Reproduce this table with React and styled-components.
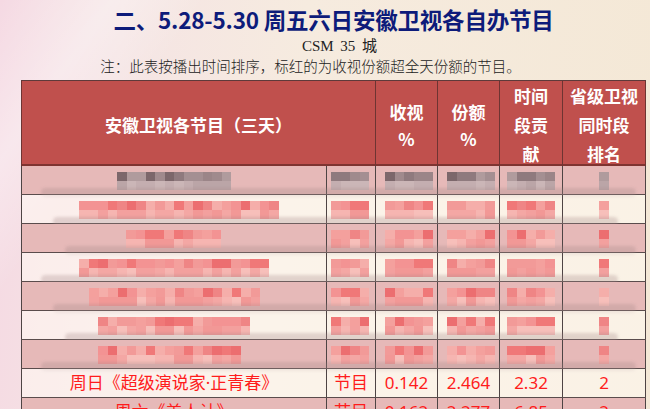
import React from "react";
import styled, { createGlobalStyle } from "styled-components";

const GlobalStyle = createGlobalStyle`
  html, body {
    margin: 0;
    padding: 0;
  }
  body {
    width: 650px;
    height: 409px;
    overflow: hidden;
    font-family: "Noto Sans CJK SC", "Noto Sans", sans-serif;
  }
`;

const Slide = styled.div`
  width: 650px;
  height: 409px;
  overflow: hidden;
  box-sizing: border-box;
  padding-left: 21px;
  background:
    linear-gradient(125deg, rgba(255, 255, 255, 0) 0%, rgba(255, 255, 255, 0.35) 12%, rgba(255, 255, 255, 0) 22%),
    linear-gradient(95deg, #f5d9e3 0%, #f5e4e4 18%, #f6ebdf 45%, #f4e8d6 100%);
  display: flex;
  flex-direction: column;
  & > * {
    flex-shrink: 0;
  }
`;

const Heading = styled.div`
  width: 625px;
  display: flex;
  flex-direction: column;
  align-items: center;
  margin-bottom: 2px;
`;

const Title = styled.h1`
  margin: 4px 0 0;
  font-family: "Noto Sans CJK SC", sans-serif;
  font-weight: 700;
  font-size: 22.5px;
  line-height: 30px;
  color: #0d1b7a;
  letter-spacing: -0.2px;
`;

const Source = styled.div`
  margin-top: 2px;
  font-family: "Liberation Serif", "Noto Sans CJK SC", serif;
  font-size: 15px;
  line-height: 20px;
  word-spacing: 3px;
  color: #222;
  padding-left: 12px;
`;

const Note = styled.div`
  font-family: "Liberation Serif", "Noto Sans CJK SC", serif;
  font-size: 14.5px;
  line-height: 22px;
  color: #222;
  padding-right: 46px;
  font-weight: 300;
`;

const cols = "305px 49px 62px 62px 63px 84px";

const HeadRow = styled.div`
  display: grid;
  grid-template-columns: ${cols};
  width: 625px;
  height: 86px;
  box-sizing: border-box;
  background: #c0504d;
  border-top: 1px solid #5e3a3a;
  border-bottom: 2px solid #7e3431;
`;

const HeadCell = styled.div`
  grid-column: ${({ $span }) => ($span ? `span ${$span}` : "auto")};
  display: flex;
  align-items: center;
  justify-content: center;
  text-align: center;
  color: #fff;
  font-weight: 700;
  font-size: 17px;
  line-height: ${({ $tight }) => ($tight ? "29px" : "27px")};
  border-left: 1px solid #6e3432;
  border-right: ${({ $last }) => ($last ? "1px solid #6e3432" : "none")};
  white-space: pre-line;
`;

const BodyRow = styled.div`
  position: relative;
  display: grid;
  grid-template-columns: ${cols};
  width: 625px;
  height: 29px;
  box-sizing: border-box;
  border-bottom: 1px solid #5a4c4c;
  background: ${({ $odd }) =>
    $odd ? "#e6b9b8" : "rgba(255, 250, 242, 0.55)"};
`;

const Cell = styled.div`
  display: flex;
  align-items: center;
  justify-content: ${({ $text }) => ($text ? "center" : "flex-start")};
  padding-left: ${({ $offset }) => `${$offset || 0}px`};
  border-left: 1px solid #4e4444;
  border-right: ${({ $last }) => ($last ? "1px solid #4e4444" : "none")};
  color: #ff1c1c;
  font-family: "Noto Sans", "Noto Sans CJK SC", sans-serif;
  font-size: 17px;
  line-height: 28px;
  white-space: nowrap;
  overflow: hidden;
`;

const MosaicGrid = styled.div`
  display: grid;
  grid-template-columns: repeat(${({ $n }) => $n}, 9.5px);
  grid-template-rows: 9px 9px;
  margin-top: 2px;
  filter: blur(0.5px);
`;

const Block = styled.div`
  background: ${({ $c }) => $c};
`;

const Smear = styled.div`
  position: absolute;
  left: ${({ $l }) => $l}px;
  right: ${({ $r }) => $r}px;
  top: 22px;
  height: 9px;
  border-radius: 5px;
  background: rgba(165, 135, 135, 0.3);
  filter: blur(1.5px);
  pointer-events: none;
`;

const reds = ["#f07878", "#f39393", "#f4a09d", "#ef8585", "#f5aeaa", "#ec6e70", "#f29a98"];
const redsLight = ["#f4a7a4", "#f6b5b1", "#f29896", "#f7bfba", "#f3a09e"];
const greys = ["#8f7a7e", "#a48f92", "#7c676b", "#b09b9d", "#9b8588", "#a08a8d"];
const greysLight = ["#c4aeb0", "#bba5a7", "#cbb6b7"];

function pick(list, seed) {
  const v = Math.abs(Math.sin(seed * 12.9898 + 78.233) * 43758.5453);
  return list[Math.floor((v - Math.floor(v)) * list.length)];
}

function Mosaic({ n, grey, seed }) {
  const top = grey ? greys : reds;
  const bottom = grey ? greysLight : redsLight;
  const blocks = [];
  for (let i = 0; i < n; i++) blocks.push(pick(top, seed * 31 + i));
  for (let i = 0; i < n; i++) blocks.push(pick(bottom, seed * 57 + i + 3));
  return (
    <MosaicGrid $n={n}>
      {blocks.map((c, i) => (
        <Block key={i} $c={c} />
      ))}
    </MosaicGrid>
  );
}

// name column mosaic: [offset from cell start, block count]
const hiddenRows = [
  { name: [95, 12], grey: true },
  { name: [57, 21] },
  { name: [104, 10] },
  { name: [57, 20] },
  { name: [67, 18] },
  { name: [76, 16] },
  { name: [76, 15] },
];

// other columns: [offset, blocks]
const dataMosaic = [
  [4, 4],
  [9, 5],
  [9, 5],
  [7, 5],
  [36, 1],
];

const textRows = [
  ["周日《超级演说家·正青春》", "节目", "0.142", "2.464", "2.32", "2"],
  ["周六《美人计》", "节目", "0.162", "2.277", "6.85", "2"],
];

export default function App() {
  return (
    <>
      <GlobalStyle />
      <Slide>
        <Heading>
          <Title>二、5.28-5.30 周五六日安徽卫视各自办节目</Title>
          <Source>CSM 35 城</Source>
          <Note>注：此表按播出时间排序，标红的为收视份额超全天份额的节目。</Note>
        </Heading>
        <HeadRow>
          <HeadCell $span={2}>安徽卫视各节目（三天）</HeadCell>
          <HeadCell>{"收视\n%"}</HeadCell>
          <HeadCell>{"份额\n%"}</HeadCell>
          <HeadCell $tight>{"时间\n段贡\n献"}</HeadCell>
          <HeadCell $tight $last>{"省级卫视\n同时段\n排名"}</HeadCell>
        </HeadRow>
        {hiddenRows.map((row, r) => (
          <BodyRow key={r} $odd={r % 2 === 0}>
            <Cell $offset={row.name[0]}>
              <Mosaic n={row.name[1]} grey={row.grey} seed={r * 7 + 1} />
            </Cell>
            {dataMosaic.map(([off, n], c) => (
              <Cell key={c} $offset={off} $last={c === dataMosaic.length - 1}>
                <Mosaic n={n} grey={row.grey} seed={r * 13 + c * 5 + 2} />
              </Cell>
            ))}
            <Smear $l={20 + (r % 3) * 12} $r={10 + (r % 2) * 18} />
          </BodyRow>
        ))}
        {textRows.map((row, r) => (
          <BodyRow key={`t${r}`} $odd={r % 2 === 1}>
            {row.map((t, c) => (
              <Cell key={c} $text $last={c === row.length - 1}>
                {t}
              </Cell>
            ))}
          </BodyRow>
        ))}
      </Slide>
    </>
  );
}
